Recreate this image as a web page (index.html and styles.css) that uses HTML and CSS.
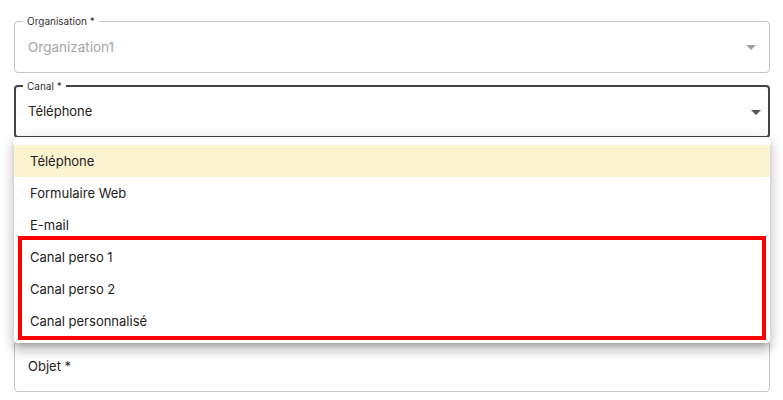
FILE: index.html
```html
<!DOCTYPE html>
<html lang="fr">
<head>
<meta charset="utf-8">
<link rel="stylesheet" href="styles.css">
</head>
<body>
<div class="form">
  <fieldset class="field field-disabled">
    <legend class="field-label">Organisation *</legend>
    <div class="field-row">
      <span class="field-value">Organization1</span>
      <svg class="arrow arrow-grey" width="10" height="5" viewBox="0 0 10 5"><path d="M0 0h10L5 5z"/></svg>
    </div>
  </fieldset>
  <fieldset class="field field-focused">
    <legend class="field-label">Canal *</legend>
    <div class="field-row">
      <span class="field-value">Téléphone</span>
      <svg class="arrow arrow-dark" width="10" height="5" viewBox="0 0 10 5"><path d="M0 0h10L5 5z"/></svg>
    </div>
  </fieldset>
  <div class="spacer"></div>
  <div class="field-plain">
    <span class="plain-label">Objet *</span>
  </div>

  <ul class="menu">
    <li class="menu-item selected">Téléphone</li>
    <li class="menu-item">Formulaire Web</li>
    <li class="menu-item">E-mail</li>
    <li class="menu-item">Canal perso 1</li>
    <li class="menu-item">Canal perso 2</li>
    <li class="menu-item">Canal personnalisé</li>
    <li class="highlight-box" aria-hidden="true"></li>
  </ul>
</div>
</body>
</html>
```

FILE: styles.css
```css
html, body {
  margin: 0;
  padding: 0;
  background: #ffffff;
}
body {
  font-family: Inter, "Noto Sans", sans-serif;
  color: #222222;
}
.form {
  position: relative;
  width: 756px;
  margin-left: 14px;
  padding-top: 15px;
  display: flex;
  flex-direction: column;
}
.field {
  margin: 0 0 7px 0;
  padding: 0 13px;
  border: 1px solid #c4c4c4;
  border-radius: 4px;
  min-width: 0;
}
.field-label {
  font-size: 10px;
  line-height: 12px;
  padding: 0 4px;
  margin-left: -5px;
  color: #333333;
}
.field-row {
  height: 44px;
  display: flex;
  align-items: center;
  justify-content: space-between;
  box-sizing: border-box;
}
.field-disabled .field-row {
  height: 45px;
  padding-bottom: 5px;
}
.field-value {
  font-size: 13px;
  line-height: 16px;
}
.field-disabled .field-value {
  color: #a6a6a6;
  font-size: 13.5px;
}
.arrow-grey {
  fill: #a0a0a0;
}
.field-focused {
  border: 2px solid #444444;
  padding: 0 12px;
}
.field-focused .field-row {
  height: 44px;
  padding-bottom: 6px;
}
.arrow-dark {
  fill: #555555;
  margin-right: -5px;
  margin-top: 2px;
}
.spacer {
  height: 196px;
}
.field-plain {
  height: 51px;
  border: 1px solid #c4c4c4;
  border-radius: 4px;
  box-sizing: border-box;
  padding: 0 13px 2px;
  display: flex;
  align-items: center;
}
.plain-label {
  font-size: 13px;
  color: #222222;
}
.menu {
  position: absolute;
  top: 137px;
  left: 0;
  width: 756px;
  margin: 0;
  padding: 8px 0 6px;
  list-style: none;
  background: #ffffff;
  border-radius: 4px;
  box-shadow: 0 5px 5px -3px rgba(0,0,0,0.2), 0 8px 10px 1px rgba(0,0,0,0.14), 0 3px 14px 2px rgba(0,0,0,0.12);
}
.menu-item {
  height: 32px;
  display: flex;
  align-items: center;
  padding: 0 16px;
  font-size: 13px;
  color: #222222;
}
.menu-item.selected {
  background: #fcf3cf;
}
.highlight-box {
  position: absolute;
  left: 4px;
  top: 99px;
  width: 748px;
  height: 104px;
  box-sizing: border-box;
  border: 4px solid #ff0000;
}
```
